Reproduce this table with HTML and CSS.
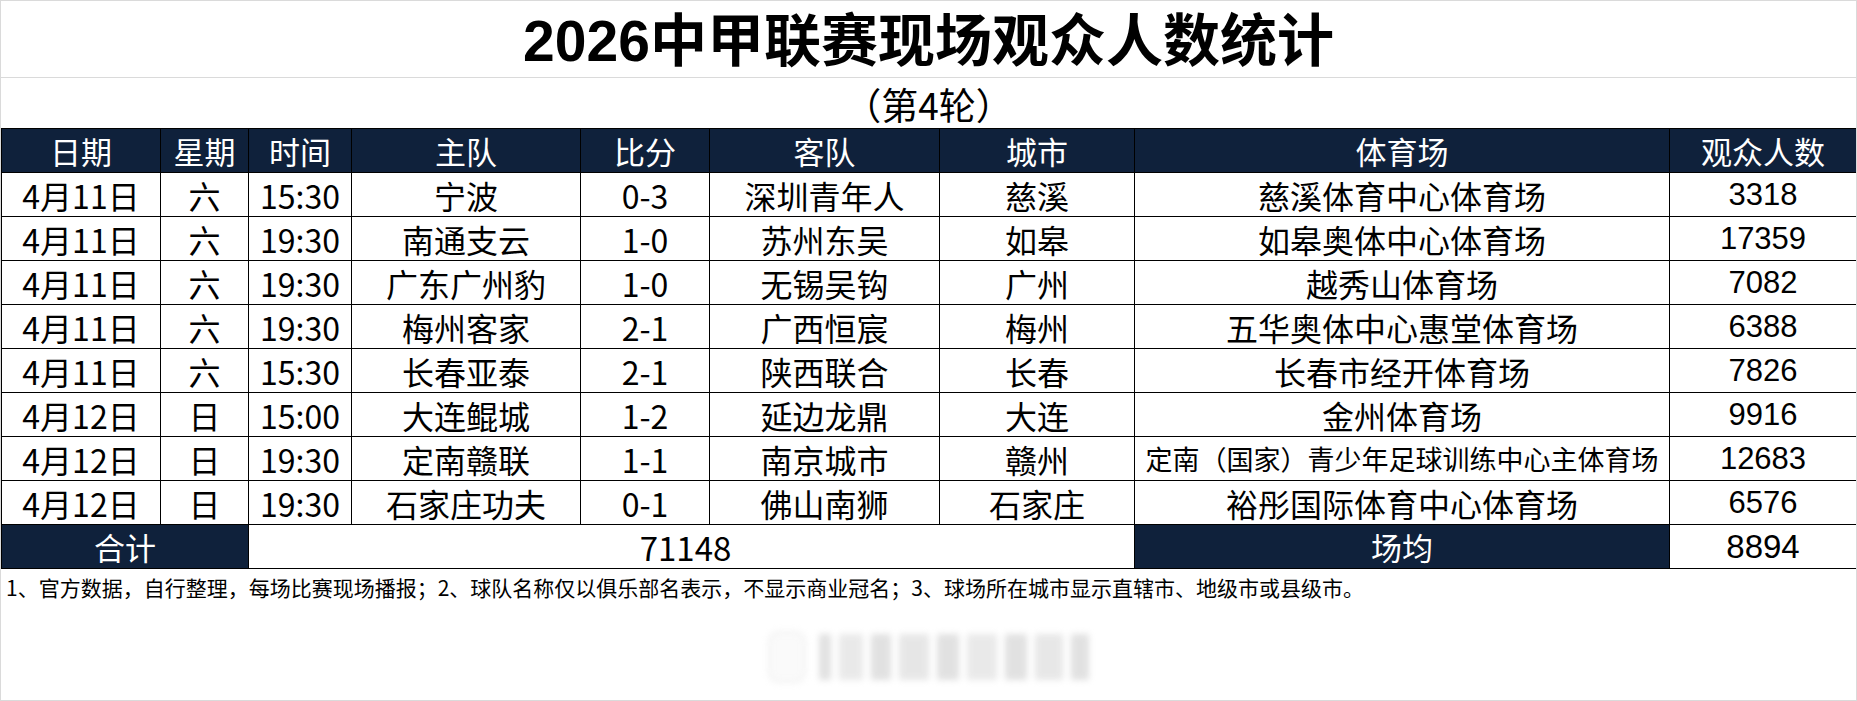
FILE: index.html
```html
<!DOCTYPE html>
<html lang="zh-CN">
<head>
<meta charset="utf-8">
<title>2026中甲联赛现场观众人数统计</title>
<link rel="stylesheet" href="styles.css">
</head>
<body>
<div class="sheet">
  <div class="title">2026中甲联赛现场观众人数统计</div>
  <div class="subtitle">（第4轮）</div>
  <table class="stats">
    <colgroup>
      <col class="c-date"><col class="c-week"><col class="c-time"><col class="c-home"><col class="c-score"><col class="c-away"><col class="c-city"><col class="c-venue"><col class="c-crowd">
    </colgroup>
    <thead>
      <tr><th>日期</th><th>星期</th><th>时间</th><th>主队</th><th>比分</th><th>客队</th><th>城市</th><th>体育场</th><th>观众人数</th></tr>
    </thead>
    <tbody>
      <tr><td>4月11日</td><td>六</td><td>15:30</td><td>宁波</td><td>0-3</td><td>深圳青年人</td><td>慈溪</td><td>慈溪体育中心体育场</td><td class="num">3318</td></tr>
      <tr><td>4月11日</td><td>六</td><td>19:30</td><td>南通支云</td><td>1-0</td><td>苏州东吴</td><td>如皋</td><td>如皋奥体中心体育场</td><td class="num">17359</td></tr>
      <tr><td>4月11日</td><td>六</td><td>19:30</td><td>广东广州豹</td><td>1-0</td><td>无锡吴钩</td><td>广州</td><td>越秀山体育场</td><td class="num">7082</td></tr>
      <tr><td>4月11日</td><td>六</td><td>19:30</td><td>梅州客家</td><td>2-1</td><td>广西恒宸</td><td>梅州</td><td>五华奥体中心惠堂体育场</td><td class="num">6388</td></tr>
      <tr><td>4月11日</td><td>六</td><td>15:30</td><td>长春亚泰</td><td>2-1</td><td>陕西联合</td><td>长春</td><td>长春市经开体育场</td><td class="num">7826</td></tr>
      <tr><td>4月12日</td><td>日</td><td>15:00</td><td>大连鲲城</td><td>1-2</td><td>延边龙鼎</td><td>大连</td><td>金州体育场</td><td class="num">9916</td></tr>
      <tr><td>4月12日</td><td>日</td><td>19:30</td><td>定南赣联</td><td>1-1</td><td>南京城市</td><td>赣州</td><td class="long">定南（国家）青少年足球训练中心主体育场</td><td class="num">12683</td></tr>
      <tr><td>4月12日</td><td>日</td><td>19:30</td><td>石家庄功夫</td><td>0-1</td><td>佛山南狮</td><td>石家庄</td><td>裕彤国际体育中心体育场</td><td class="num">6576</td></tr>
    </tbody>
    <tfoot>
      <tr><th colspan="2">合计</th><td colspan="5" class="total">71148</td><th>场均</th><td class="num avg">8894</td></tr>
    </tfoot>
  </table>
  <p class="notes">1、官方数据，自行整理，每场比赛现场播报；2、球队名称仅以俱乐部名表示，不显示商业冠名；3、球场所在城市显示直辖市、地级市或县级市。</p>
  <div class="watermark">
    <span class="wm-logo"></span>
    <span class="wm-bar w1"></span>
    <span class="wm-bar w2"></span>
    <span class="wm-bar w3"></span>
    <span class="wm-bar w4"></span>
    <span class="wm-bar w5"></span>
    <span class="wm-bar w6"></span>
    <span class="wm-bar w7"></span>
    <span class="wm-bar w8"></span>
    <span class="wm-bar w9"></span>
  </div>
</div>
</body>
</html>
```
FILE: styles.css
```css
html, body {
  margin: 0;
  padding: 0;
  background: #ffffff;
}

.sheet {
  width: 1857px;
  height: 701px;
  box-sizing: border-box;
  border: 1px solid #dadada;
  background: #ffffff;
  overflow: hidden;
  font-family: "Noto Sans CJK SC", sans-serif;
  color: #000000;
}

.title {
  height: 76px;
  line-height: 80px;
  border-bottom: 1px solid #dadada;
  text-align: center;
  font-family: "Liberation Sans", "Noto Sans CJK SC", sans-serif;
  font-weight: bold;
  font-size: 57px;
  color: #000000;
}

.subtitle {
  height: 50px;
  line-height: 52px;
  text-align: center;
  font-size: 37px;
  color: #000000;
}

.stats {
  width: 1855px;
  border-collapse: collapse;
  table-layout: fixed;
}

.c-date { width: 159px; }
.c-week { width: 88px; }
.c-time { width: 103px; }
.c-home { width: 229px; }
.c-score { width: 129px; }
.c-away { width: 230px; }
.c-city { width: 195px; }
.c-venue { width: 535px; }
.c-crowd { width: 187px; }

.stats tr {
  height: 44px;
}

.stats th,
.stats td {
  border: 1px solid #000000;
  padding: 0;
  height: 43px;
  text-align: center;
  vertical-align: middle;
  font-size: 31px;
  line-height: 40px;
  font-weight: normal;
  white-space: nowrap;
}

.stats th {
  background: #0f213b;
  color: #ffffff;
}

.stats td {
  color: #000000;
  font-size: 32px;
}

.stats td.long {
  font-size: 27px;
}

.stats td.num {
  font-family: "Liberation Sans", sans-serif;
  font-size: 31px;
}

.stats td.avg {
  font-size: 33px;
}

.stats td.total {
  font-size: 33px;
  padding-right: 12px;
}

.notes {
  margin: 0;
  padding-left: 5px;
  height: 36px;
  line-height: 36px;
  font-size: 21px;
  white-space: nowrap;
  color: #000000;
}

.watermark {
  display: flex;
  align-items: stretch;
  gap: 8px;
  height: 46px;
  margin-top: 29px;
  padding-left: 770px;
  filter: blur(3px);
  opacity: 0.5;
}

.wm-logo {
  width: 32px;
  margin-right: 8px;
  border-radius: 8px;
  background: #f6f6f6;
  box-shadow: 0 0 0 3px #e4e4e4;
}

.wm-bar {
  background: #c4c4c4;
}

.w1 { width: 12px; }
.w2 { width: 24px; background: #d4d4d4; }
.w3 { width: 20px; }
.w4 { width: 30px; background: #cfcfcf; }
.w5 { width: 22px; }
.w6 { width: 30px; background: #d4d4d4; }
.w7 { width: 22px; }
.w8 { width: 28px; background: #d0d0d0; }
.w9 { width: 18px; }
```
